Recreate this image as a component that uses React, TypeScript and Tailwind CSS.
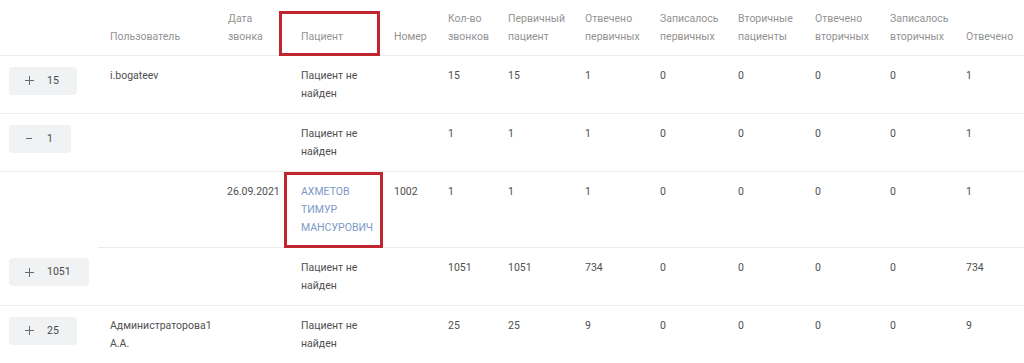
import React from 'react';

type Row = {
  toggle?: { sign: '+' | '–'; count: number };
  user?: string;
  date?: string;
  patient: string;
  patientLink?: boolean;
  phone?: string;
  stats: (string | number)[];
  noFirstBorder?: boolean;
  marked?: boolean;
};

const HEADERS = [
  '',
  'Пользователь',
  'Дата звонка',
  'Пациент',
  'Номер',
  'Кол-во звонков',
  'Первичный пациент',
  'Отвечено первичных',
  'Записалось первичных',
  'Вторичные пациенты',
  'Отвечено вторичных',
  'Записалось вторичных',
  'Отвечено',
];

const WIDTHS = [98, 118, 73, 93, 54, 60, 77, 75, 78, 77, 75, 76, 70];

const ROWS: Row[] = [
  { toggle: { sign: '+', count: 15 }, user: 'i.bogateev', patient: 'Пациент не найден', stats: [15, 15, 1, 0, 0, 0, 0, 1] },
  { toggle: { sign: '–', count: 1 }, patient: 'Пациент не найден', stats: [1, 1, 1, 0, 0, 0, 0, 1] },
  {
    date: '26.09.2021',
    patient: 'АХМЕТОВ ТИМУР МАНСУРОВИЧ',
    patientLink: true,
    phone: '1002',
    stats: [1, 1, 1, 0, 0, 0, 0, 1],
    noFirstBorder: true,
    marked: true,
  },
  { toggle: { sign: '+', count: 1051 }, patient: 'Пациент не найден', stats: [1051, 1051, 734, 0, 0, 0, 0, 734] },
  { toggle: { sign: '+', count: 25 }, user: 'Администраторова1 А.А.', patient: 'Пациент не найден', stats: [25, 25, 9, 0, 0, 0, 0, 9] },
];

const Toggle: React.FC<{ sign: '+' | '–'; count: number }> = ({ sign, count }) => (
  <button className="mt-[1px] flex h-7 items-center rounded-[4px] bg-[#f1f2f4] pl-4 pr-[18px] text-[10.5px] text-[#4a4a4a]">
    {sign === '+' ? (
      <svg width="9" height="9" viewBox="0 0 9 9" className="mr-[13px]">
        <path d="M4.5 0v9M0 4.5h9" stroke="#6a6a6a" strokeWidth="1" />
      </svg>
    ) : (
      <svg width="9" height="9" viewBox="0 0 9 9" className="mr-[13px]">
        <path d="M1 4.5h6" stroke="#6a6a6a" strokeWidth="1" />
      </svg>
    )}
    <span>{count}</span>
  </button>
);

export default function App() {
  const cell = 'align-top pt-[11px] pb-[10px] pl-3 pr-2 border-b border-[#ececec]';
  return (
    <div className="w-[1024px] h-[363px] overflow-hidden bg-white" style={{ fontFamily: 'Roboto, "Noto Sans", sans-serif' }}>
      <table className="table-fixed border-collapse w-[1024px] text-[10.5px] leading-[18px]">
        <colgroup>
          {WIDTHS.map((w, i) => (
            <col key={i} style={{ width: w }} />
          ))}
        </colgroup>
        <thead>
          <tr className="h-[55px]">
            {HEADERS.map((h, i) => (
              <th
                key={i}
                className={`align-bottom pb-[9px] pl-3 pr-2 text-left font-normal text-[#939393] border-b border-[#ececec] ${i === 3 ? 'relative' : ''}`}
              >
                {h}
                {i === 3 && (
                  <div className="absolute left-[-10px] top-[11px] h-[45px] w-[101px] border-[3px] border-[#c0262d]" />
                )}
              </th>
            ))}
          </tr>
        </thead>
        <tbody>
          {ROWS.map((r, ri) => (
            <tr key={ri} className="text-[#4f4f4f]">
              <td className={`align-top pt-[10px] pb-[11px] pl-[9px] ${r.noFirstBorder ? '' : 'border-b border-[#ececec]'}`}>
                {r.toggle && <Toggle sign={r.toggle.sign} count={r.toggle.count} />}
              </td>
              <td className={cell}>{r.user}</td>
              <td className={`${cell} !pl-[11px]`}>{r.date}</td>
              <td className={`${cell} relative`}>
                <span className={r.patientLink ? 'text-[#7d98c8]' : ''}>{r.patient}</span>
                {r.marked && (
                  <div className="absolute left-[-5px] top-0 h-[76px] w-[99px] border-[3px] border-[#c0262d]" />
                )}
              </td>
              <td className={cell}>{r.phone}</td>
              {r.stats.map((s, si) => (
                <td key={si} className={cell}>
                  {s}
                </td>
              ))}
            </tr>
          ))}
        </tbody>
      </table>
    </div>
  );
}
